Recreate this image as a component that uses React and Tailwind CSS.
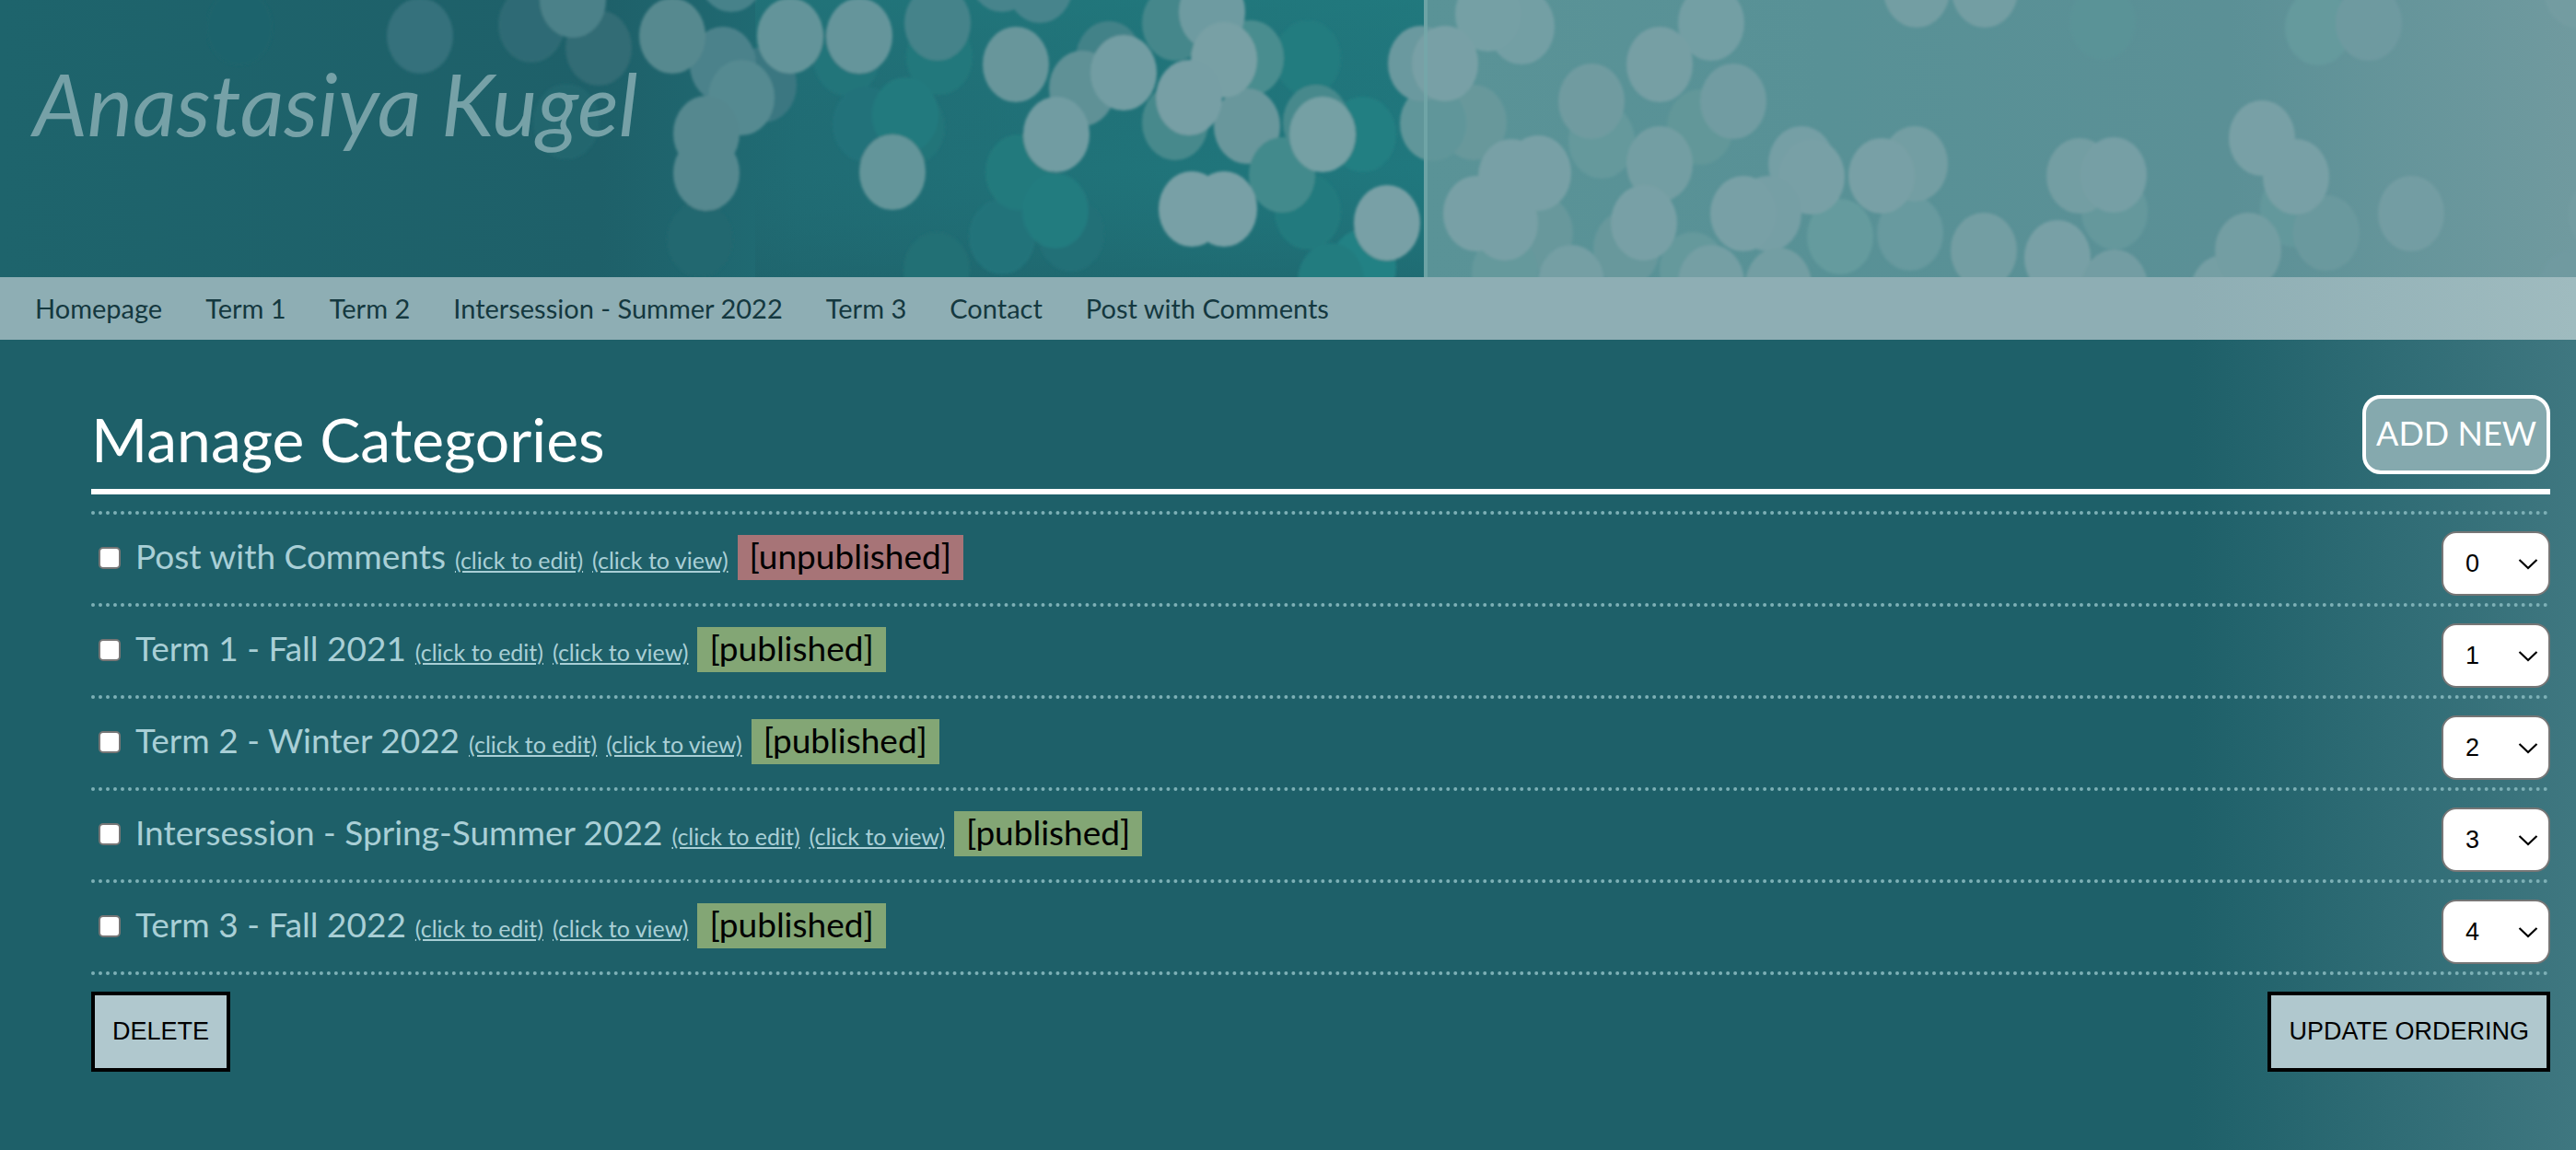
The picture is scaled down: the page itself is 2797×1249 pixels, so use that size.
import React from "react";

const navLinks = [
  "Homepage",
  "Term 1",
  "Term 2",
  "Intersession - Summer 2022",
  "Term 3",
  "Contact",
  "Post with Comments",
];

const categories = [
  { id: 1, title: "Post with Comments", published: false },
  { id: 2, title: "Term 1 - Fall 2021", published: true },
  { id: 3, title: "Term 2 - Winter 2022", published: true },
  { id: 4, title: "Intersession - Spring-Summer 2022", published: true },
  { id: 5, title: "Term 3 - Fall 2022", published: true },
];

// banner lights, back to front: [x, y, color]
const lights = [
  // faint ones
  [615, 132, "#21666e"],
  [260, 30, "#1f646c"],
  [919, 63, "#21757a"],
  [940, 135, "#20727a"],
  [760, 260, "#20676f"],
  [1020, 62, "#21787c"],
  [990, 138, "#227479"],
  [983, 125, "#237a7e"],
  [1088, 257, "#22737a"],
  [1163, 254, "#226f77"],
  [1106, 187, "#227a7d"],
  [1146, 229, "#237b7f"],
  [1017, 293, "#226f74"],
  [1420, 63, "#227c7f"],
  [1480, 146, "#227f82"],
  [1420, 230, "#217a7e"],
  [1480, 290, "#228184"],
  [1445, 305, "#217b7f"],
  [1739, 153, "#65999c"],
  [1846, 138, "#629799"],
  [1672, 253, "#67989c"],
  [1634, 296, "#65999c"],
  [1766, 270, "#67989c"],
  [1838, 293, "#65999c"],
  [1998, 257, "#659b9e"],
  [2074, 253, "#679a9f"],
  [2283, 24, "#5a9397"],
  [2296, 230, "#65989c"],
  [2490, 227, "#64989c"],
  [2526, 253, "#6a999e"],
  [2517, 30, "#659a9d"],
  // left side
  [456, 39, "#35717b"],
  [577, 27, "#2d6b74"],
  [650, 52, "#306c75"],
  [622, 0, "#4b8189"],
  [794, -28, "#47828a"],
  [829, 92, "#3a7781"],
  [785, 70, "#4c828b"],
  [730, 39, "#57898f"],
  [858, 39, "#63949a"],
  [933, 39, "#65959b"],
  [1018, 25, "#45838a"],
  [805, 106, "#558a91"],
  [767, 145, "#54888f"],
  [767, 188, "#54888f"],
  [969, 187, "#64959a"],
  [1088, -28, "#46848c"],
  [1129, -16, "#46848c"],
  [1103, 70, "#67969b"],
  [1204, 64, "#438288"],
  [1175, 96, "#5f9196"],
  [1220, 79, "#729da3"],
  [1147, 146, "#719ca2"],
  [1276, 25, "#45878b"],
  [1358, 63, "#4a8d8f"],
  [1276, 133, "#46898c"],
  [1316, 13, "#6e9ba1"],
  [1354, 137, "#69979c"],
  [1329, 65, "#78a0a5"],
  [1291, 106, "#779fa5"],
  [1392, 190, "#438a8c"],
  [1294, 227, "#78a0a6"],
  [1329, 227, "#78a0a6"],
  [1429, 133, "#46898c"],
  [1436, 146, "#75a0a4"],
  [1506, 242, "#78a0a6"],
  // right side
  [1600, 133, "#67989b"],
  [1556, 134, "#60969a"],
  [1543, 69, "#6b999f"],
  [1652, 29, "#739fa4"],
  [1616, 15, "#75a0a5"],
  [1569, 69, "#78a0a6"],
  [1728, 110, "#709ba0"],
  [1858, 25, "#739fa4"],
  [1802, 70, "#769fa4"],
  [1882, 110, "#719ca2"],
  [1641, 192, "#78a0a6"],
  [1670, 188, "#78a0a6"],
  [1603, 232, "#78a0a6"],
  [1634, 242, "#78a0a6"],
  [1706, 307, "#759fa4"],
  [1802, 178, "#739ea3"],
  [1785, 242, "#78a0a6"],
  [1956, 178, "#759fa5"],
  [1967, 192, "#78a0a6"],
  [1920, 232, "#769fa5"],
  [1893, 232, "#78a0a6"],
  [1858, 307, "#759fa4"],
  [1931, 310, "#739ea3"],
  [2079, 178, "#739ea3"],
  [2043, 191, "#78a0a6"],
  [2081, -11, "#739ea3"],
  [2155, -11, "#739ea3"],
  [2258, 191, "#739ea3"],
  [2295, 190, "#769fa5"],
  [2154, 272, "#739ea3"],
  [2234, 280, "#78a0a6"],
  [2296, 312, "#739da3"],
  [2456, 150, "#78a0a6"],
  [2493, 192, "#78a0a6"],
  [2414, 318, "#759fa4"],
  [2441, 272, "#739ea3"],
  [2618, 232, "#739da3"],
  [2572, 25, "#6e9aa0"],
  [2798, -11, "#739ca1"],
  [2793, 312, "#6f9aa0"],
  [2825, 233, "#739ca1"],
];

function Banner() {
  return (
    <header className="relative h-[301px] overflow-hidden bg-[#1e6069]">
      <svg
        className="absolute inset-0 h-full w-full"
        viewBox="0 0 2797 301"
        preserveAspectRatio="xMidYMid slice"
        aria-hidden="true"
      >
        <defs>
          <linearGradient id="water" x1="0" x2="1546" y1="0" y2="0" gradientUnits="userSpaceOnUse">
            <stop offset="0" stopColor="#1e646c" />
            <stop offset="0.42" stopColor="#1e6069" />
            <stop offset="0.56" stopColor="#206c74" />
            <stop offset="0.78" stopColor="#207379" />
            <stop offset="1" stopColor="#20787e" />
          </linearGradient>
          <linearGradient id="depth" x1="0" x2="0" y1="0" y2="1">
            <stop offset="0" stopColor="#22797d" stopOpacity="0.5" />
            <stop offset="0.6" stopColor="#206a72" stopOpacity="0" />
            <stop offset="1" stopColor="#1e6068" stopOpacity="0.5" />
          </linearGradient>
          <linearGradient id="mist" x1="1546" x2="2797" y1="0" y2="0" gradientUnits="userSpaceOnUse">
            <stop offset="0" stopColor="#5a9397" />
            <stop offset="0.35" stopColor="#589196" />
            <stop offset="0.7" stopColor="#5b9096" />
            <stop offset="1" stopColor="#709a9f" />
          </linearGradient>
          <filter id="soft" x="0" y="0" width="100%" height="100%">
            <feGaussianBlur stdDeviation="1.6" />
          </filter>
        </defs>
        <rect width="1548" height="301" fill="url(#water)" />
        <rect x="820" width="726" height="301" fill="url(#depth)" />
        <rect x="1546" width="1251" height="301" fill="url(#mist)" />
        <g filter="url(#soft)">
          {lights.map(([x, y, color], i) => (
            <ellipse key={i} cx={x} cy={y} rx="36" ry="41" fill={color} />
          ))}
        </g>
        <rect x="1546" width="4" height="301" fill="#74a8a9" opacity="0.75" />
      </svg>
      <a
        href="#home"
        className="relative ml-9 mt-12 inline-block font-['Lato'] text-[93px] italic leading-[128px] text-[#76a1a7]"
      >
        Anastasiya Kugel
      </a>
    </header>
  );
}

function Navbar() {
  return (
    <nav className="flex h-[68px] items-center gap-[47px] bg-[linear-gradient(to_right,#8eaeb4_85%,#9fbbbf)] px-[38px] text-[29px] text-[#14383f]">
      {navLinks.map((link) => (
        <a key={link} href="#page">
          {link}
        </a>
      ))}
    </nav>
  );
}

function CategoryRow({ category, order }) {
  return (
    <li className="flex items-start justify-between border-b-4 border-dotted border-[#7db0b6] pb-2 pt-[18px]">
      <div className="mt-1 flex items-baseline gap-[10px] text-[#a9cfd6]">
        <input
          type="checkbox"
          id={`category-${category.id}`}
          className="ml-2 h-6 w-6 appearance-none rounded-[5px] border-2 border-[#767676] bg-white"
        />
        <label htmlFor={`category-${category.id}`} className="ml-[6px] text-[37px] leading-[45px]">
          {category.title}
        </label>
        <a href="#edit" className="text-[25px] underline underline-offset-2">
          (click to edit)
        </a>
        <a href="#view" className="text-[25px] underline underline-offset-2">
          (click to view)
        </a>
        {category.published ? (
          <span className="bg-[#83a675] px-[13px] pb-1 text-[37px] leading-[45px] text-black">[published]</span>
        ) : (
          <span className="bg-[#a77477] px-[13px] pb-1 text-[37px] leading-[45px] text-black">[unpublished]</span>
        )}
      </div>

      {/* Order picker */}
      <div className="relative">
        <select
          aria-label={`Order of ${category.title}`}
          defaultValue={order}
          className="block h-[70px] w-[118px] appearance-none rounded-2xl border-2 border-[#767676] bg-white pl-6 font-['Liberation_Sans'] text-[27px] text-black"
        >
          {categories.map((c, i) => (
            <option key={c.id} value={i}>
              {i}
            </option>
          ))}
        </select>
        <svg
          className="pointer-events-none absolute right-3 top-7 h-4 w-6"
          viewBox="0 0 24 16"
          fill="none"
          stroke="black"
          strokeWidth="2.2"
          aria-hidden="true"
        >
          <path d="M2.5 3 L12 12 L21.5 3" />
        </svg>
      </div>
    </li>
  );
}

export default function App() {
  return (
    <div className="min-h-screen bg-[linear-gradient(to_right,#1e6069_85%,#3f7780)] font-['Lato',sans-serif]">
      <Banner />
      <Navbar />

      <main className="pb-16 pl-[99px] pr-7 pt-[60px]">
        {/* Title */}
        <div className="flex items-start justify-between border-b-[6px] border-white pb-4 text-white">
          <h1 className="mt-[10px] text-[66px] leading-[76px]">Manage Categories</h1>
          <button className="h-[86px] rounded-[20px] border-4 border-white bg-[#85a9ae] px-[11px] pb-1 text-[36px]">
            ADD NEW
          </button>
        </div>

        {/* Categories */}
        <form onSubmit={(e) => e.preventDefault()}>
          <ul className="mt-[18px] border-t-4 border-dotted border-[#7db0b6]">
            {categories.map((category, i) => (
              <CategoryRow key={category.id} category={category} order={i} />
            ))}
          </ul>
          <div className="mt-[18px] flex justify-between font-['Liberation_Sans'] text-[27px] text-black">
            <button className="h-[87px] border-4 border-black bg-[#b0c8ce] px-[19px]">DELETE</button>
            <button className="h-[87px] border-4 border-black bg-[#b0c8ce] px-[19px]">UPDATE ORDERING</button>
          </div>
        </form>
      </main>
    </div>
  );
}
